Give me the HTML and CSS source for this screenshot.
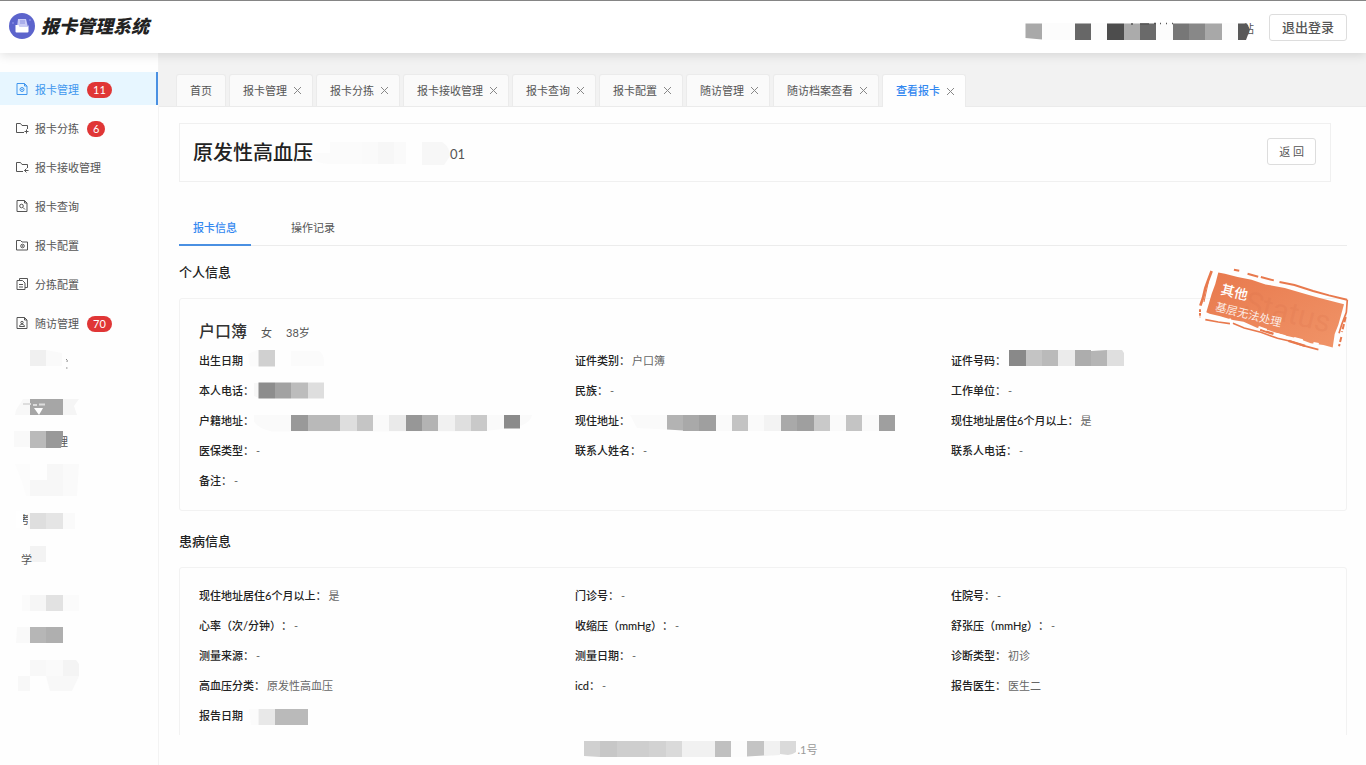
FILE: index.html
```html
<!DOCTYPE html>
<html lang="zh-CN">
<head>
<meta charset="utf-8">
<title>报卡管理系统</title>
<link rel="stylesheet" href="styles.css">
</head>
<body>
<header class="header">
  <div class="brand">
    <svg class="brand-logo" viewBox="0 0 26 26" width="26" height="26" aria-hidden="true">
      <circle cx="13" cy="13" r="13" fill="#5c64cc"/>
      <circle cx="4" cy="10" r="1" fill="#8289e0"/><circle cx="21" cy="7" r="1" fill="#8289e0"/>
      <path d="M9 6h8l2 8H8z" fill="#c9cbf5"/>
      <path d="M11 8h5M11 10h5" stroke="#8a90e0" stroke-width="1"/>
      <path d="M6.500 12h3l1 2h8l1-2v6.500a1 1 0 0 1-1 1h-11a1 1 0 0 1-1-1z" fill="#fff"/>
    </svg>
    <h1 class="brand-name">报卡管理系统</h1>
  </div>
  <div class="header-right">
    <svg viewBox="1025 1 231 52" width="231" height="52" aria-hidden="true">
      <text class="fragment-text" x="1243" y="33">站</text>
      <path d="M1042 23h196v17h-196z" fill="#fcfcfc"/>
      <path d="M1025.500 23.500h16.500v16l-16.500-1.500z" fill="#a9a9a9"/>
      <path d="M1075 23.500h16v16.500h-16z" fill="#676767"/>
      <path d="M1107 23.500h17v16.500h-17z" fill="#4d4d4d"/>
      <path d="M1124 23.500h16v16.500h-16z" fill="#ababab"/>
      <path d="M1140 23.500h16v16.500h-16z" fill="#6a6a6a"/>
      <path d="M1173 23.500h16v16.500h-16z" fill="#777"/>
      <path d="M1189 23.500h16v16.500h-16z" fill="#888"/>
      <path d="M1205 23.500h17v16.500h-17z" fill="#a8a8a8"/>
      <path d="M1238 23.500h9l3 6-4 10.500h-8z" fill="#595959"/>
      <path d="M1131 24h2M1140 24h9M1154 23.500h2M1160 23.500h1M1166 23.500h1M1172 23.500h1" stroke="#555" stroke-width="1.500"/>
    </svg>
    <button class="btn btn-logout" type="button">退出登录</button>
  </div>
</header>
<div class="body">
  <nav class="sidebar" aria-label="主菜单">
    <a class="menu-item active" href="#">
      <svg class="icon" viewBox="0 0 14 14"><path d="M2 1.500h7.500L12 4v8.500H2zM9.500 1.500V4H12"/><circle cx="7" cy="7.500" r="2"/><circle cx="7" cy="7.500" r=".5"/></svg>
      <span>报卡管理</span><span class="badge">11</span></a>
    <a class="menu-item" href="#">
      <svg class="icon" viewBox="0 0 14 14"><path d="M9 11.500H1.500v-9h4l1.500 2h5.500V8M11.500 8.500v4M9.500 10.500h4"/></svg>
      <span>报卡分拣</span><span class="badge">6</span></a>
    <a class="menu-item" href="#">
      <svg class="icon" viewBox="0 0 14 14"><path d="M8 11.500H1.500v-9h4l1.500 2h5.500V8M13.500 10.500h-4M11.500 8.500l-2 2 2 2"/></svg>
      <span>报卡接收管理</span></a>
    <a class="menu-item" href="#">
      <svg class="icon" viewBox="0 0 14 14"><path d="M2 1.500h7.500L12 4v8.500H2zM9.500 1.500V4H12M8 8.500l2 2"/><circle cx="6.500" cy="7" r="1.800"/></svg>
      <span>报卡查询</span></a>
    <a class="menu-item" href="#">
      <svg class="icon" viewBox="0 0 14 14"><path d="M1.500 2.500h4l1.500 1.500h5.500v8h-11z"/><circle cx="7.500" cy="8" r="1.800"/><circle cx="7.500" cy="8" r=".4"/></svg>
      <span>报卡配置</span></a>
    <a class="menu-item" href="#">
      <svg class="icon" viewBox="0 0 14 14"><path d="M4.500 3.500v-2h8v9h-2.500M2 3.500h5.500l2.500 2.500v6.500H2zM4 7.500h4M4 10h4"/></svg>
      <span>分拣配置</span></a>
    <a class="menu-item" href="#">
      <svg class="icon" viewBox="0 0 14 14"><path d="M2 1.500h7.500L12 4v8.500H2zM9.500 1.500V4H12M4.500 10.500c0-3 5-3 5 0z"/><circle cx="7" cy="6.500" r="1.200"/></svg>
      <span>随访管理</span><span class="badge">70</span></a>
    <svg viewBox="0 345 158 350" width="158" height="350" aria-hidden="true">
      <path d="M30 350h16v16H30z" fill="#f0f0f0"/><path d="M46 350l16 3v13H46z" fill="#fafafa"/>
      <path d="M66 359q2 1 1 3M66 368h1.500" stroke="#888" fill="none"/>
      <path d="M16 410l7-11h7v16H15z" fill="#f8f8f8"/><path d="M30 399h33v16H30z" fill="#a6a6a6"/>
      <path d="M63 399h16l-5 7 3 9H63z" fill="#f5f5f5"/><path d="M34 408h9l-4 7z" fill="#fff"/>
      <path d="M23 404h8M33 405h4M39 404.500h6" stroke="#ddd" stroke-width="2" fill="none"/>
      <path d="M14 431h16v16H14z" fill="#f9f9f9"/><text class="fragment-text" x="57" y="446">理</text>
      <path d="M30 431h16v17H30z" fill="#bababa"/><path d="M46 431h17v5l-2 12H46z" fill="#999"/>
      <path d="M15 464h15v32h-4l-4-14z" fill="#fcfcfc"/><path d="M30 480h17v-16h16v32H30z" fill="#f7f7f7"/><path d="M63 464h16l-2 32H63z" fill="#fafafa"/>
      <text class="fragment-text" x="19" y="524">考</text><path d="M16 511h7v17h-7z" fill="#fff"/>
      <path d="M28 513h2v16h-2z" fill="#fafafa"/><path d="M30 513h16v16H30z" fill="#dedede"/><path d="M46 513h17v16H46z" fill="#e5e5e5"/><path d="M63 513h12v16H63z" fill="#fafafa"/>
      <path d="M30 546h16v16H30z" fill="#f3f3f3"/><text class="fragment-text" x="21" y="564">学</text>
      <path d="M22 595h8v16h-8zM63 595h16v16H63z" fill="#fbfbfb"/><path d="M30 595h16v16H30z" fill="#f6f6f6"/><path d="M46 595h17v16H46z" fill="#e2e2e2"/>
      <path d="M17 627h13v16H16z" fill="#f9f9f9"/><path d="M30 627h16v16H30z" fill="#b6b6b6"/><path d="M46 627h17v16H46z" fill="#afafaf"/>
      <path d="M30 660h16v16H30zM18 676h12v15H18zM46 676h33l-7 15H50z" fill="#f8f8f8"/><path d="M46 660h17v16H46z" fill="#fafafa"/><path d="M63 660h13l3 4v12H63z" fill="#f4f4f4"/>
    </svg>
  </nav>
  <main class="main">
    <div class="page-tabs">
      <a class="page-tab" href="#">首页</a>
      <div class="page-tab"><a href="#">报卡管理</a><button class="tab-close" type="button" aria-label="关闭报卡管理"><svg viewBox="0 0 9 9"><path d="M1 1l7 7M8 1l-7 7"/></svg></button></div>
      <div class="page-tab"><a href="#">报卡分拣</a><button class="tab-close" type="button" aria-label="关闭报卡分拣"><svg viewBox="0 0 9 9"><path d="M1 1l7 7M8 1l-7 7"/></svg></button></div>
      <div class="page-tab"><a href="#">报卡接收管理</a><button class="tab-close" type="button" aria-label="关闭报卡接收管理"><svg viewBox="0 0 9 9"><path d="M1 1l7 7M8 1l-7 7"/></svg></button></div>
      <div class="page-tab"><a href="#">报卡查询</a><button class="tab-close" type="button" aria-label="关闭报卡查询"><svg viewBox="0 0 9 9"><path d="M1 1l7 7M8 1l-7 7"/></svg></button></div>
      <div class="page-tab"><a href="#">报卡配置</a><button class="tab-close" type="button" aria-label="关闭报卡配置"><svg viewBox="0 0 9 9"><path d="M1 1l7 7M8 1l-7 7"/></svg></button></div>
      <div class="page-tab"><a href="#">随访管理</a><button class="tab-close" type="button" aria-label="关闭随访管理"><svg viewBox="0 0 9 9"><path d="M1 1l7 7M8 1l-7 7"/></svg></button></div>
      <div class="page-tab"><a href="#">随访档案查看</a><button class="tab-close" type="button" aria-label="关闭随访档案查看"><svg viewBox="0 0 9 9"><path d="M1 1l7 7M8 1l-7 7"/></svg></button></div>
      <div class="page-tab current"><a href="#">查看报卡</a><button class="tab-close" type="button" aria-label="关闭查看报卡"><svg viewBox="0 0 9 9"><path d="M1 1l7 7M8 1l-7 7"/></svg></button></div>
    </div>
    <div class="content">
      <section class="title-card">
        <h2 class="title">原发性高血压</h2>
        <svg viewBox="313 137 137 32" width="137" height="32" aria-hidden="true">
          <path d="M313 154h17v-11h32v22h-32q-14 0-17-7z" fill="#fbfbfb"/><path d="M362 143h16v22h-16zM394 143h12v22h-12z" fill="#fafafa"/><path d="M378 143h16v22h-16zM422 143h20q8 5 8 14l-6 9h-22z" fill="#f7f7f7"/>
        </svg>
        <span class="card-no">01</span>
        <button class="btn btn-back" type="button">返 回</button>
      </section>
      <div class="tabs">
        <button class="tab selected" type="button">报卡信息</button>
        <button class="tab" type="button">操作记录</button>
      </div>

      <h3 class="section-title">个人信息</h3>
      <section class="info-card personal">
        <svg class="stamp" viewBox="140 50 460 255" width="153" height="85" role="img" aria-label="其他 基层无法处理">
          <defs><linearGradient id="stampFill" x1="0" y1="0" x2="1" y2="1"><stop offset="0" stop-color="#e8794d"/><stop offset="1" stop-color="#f09468"/></linearGradient></defs>
          <path d="M204 66l20 4 38 10 42 8 42 14 58 11 62 18 40 11 76 20-8 29-9 32-11 28-6 41-28-8-38-5-38-14-42-10-46-15-36-8-40-18-32-5-38-11-32-8-10-4 9-31 7-24 11-30z" fill="url(#stampFill)"/>
          <g fill="none" stroke="#e8794d" stroke-width="6">
            <path d="M184 62l-11 29-8 22-7 30-8 23" stroke-width="8"/><path d="M149 177v24" stroke-dasharray="8 3"/>
            <path d="M174 95l-13 60" stroke-width="3"/>
            <path d="M251 58l16 3M292 70l32 9M332 80l39 10M388 95l45 9 56 18 48 13 54 13"/>
            <path d="M592 148l-3 38-14 37-8 26" stroke-width="5"/><path d="M587 200l-11 45M574 260l-7 28" stroke-dasharray="16 6"/>
            <path d="M165 208l39 7 35 5M248 219l34 14 50 13 50 18 39 9 39 13 45 12" stroke-width="5"/>
            <path d="M415 272l50 15M330 238l40 13" stroke-width="7"/>
          </g>
          <path d="M238 205l5 14M325 230l25 9M380 251l26 7M432 263l26 7M490 278l16 3" stroke="#fff" stroke-width="6" fill="none"/>
          <text class="stamp-mark" transform="translate(278 184) rotate(14)">Status</text>
          <text class="stamp-title" transform="translate(209 130) rotate(14)">其他</text>
          <text class="stamp-note" transform="translate(193 180) rotate(14)">基层无法处理</text>
        </svg>
        <div class="person"><strong class="person-name">户口簿</strong><span>女</span><span>38岁</span></div>
        <dl class="fields">
          <div class="field"><dt>出生日期</dt><dd><svg viewBox="243 345 84 30" width="84" height="30" aria-hidden="true"><path d="M258.500 350h16.500v16.500h-16.500z" fill="#d0d0d0"/><path d="M248 354l10-4v16.500h-8zM291 351h28q6 3 5 15h-33z" fill="#fbfbfb"/></svg></dd></div>
          <div class="field"><dt>证件类别：</dt><dd>户口簿</dd></div>
          <div class="field"><dt>证件号码：</dt><dd><svg viewBox="1006 345 120 30" width="120" height="30" aria-hidden="true"><path d="M1009 350h17v16h-17z" fill="#898989"/><path d="M1026 350h16v16h-16z" fill="#c4c4c4"/><path d="M1042 350h16v16h-16z" fill="#bababa"/><path d="M1058 350h17v16h-17z" fill="#ebebeb"/><path d="M1075 350h16v16h-16z" fill="#adadad"/><path d="M1091 351l16-1v16h-16z" fill="#b5b5b5"/><path d="M1107 350h15l2 3v13h-17z" fill="#dfdfdf"/></svg></dd></div>
          <div class="field"><dt>本人电话：</dt><dd><svg viewBox="254 375 72 30" width="72" height="30" aria-hidden="true"><path d="M254 383h5v15l-5-2z" fill="#f7f7f7"/><path d="M258.500 382.500h16.500v16h-16.500z" fill="#8d8d8d"/><path d="M275 382.500h16v16h-16z" fill="#a2a2a2"/><path d="M291 382.500h17v16h-17z" fill="#bcbcbc"/><path d="M308 382.500h16v16h-16z" fill="#dedede"/></svg></dd></div>
          <div class="field"><dt>民族：</dt><dd>-</dd></div>
          <div class="field"><dt>工作单位：</dt><dd>-</dd></div>
          <div class="field"><dt>户籍地址：</dt><dd><svg viewBox="254 405 282 30" width="282" height="30" aria-hidden="true"><path d="M254 415h278q-2 12-30 14l-20 2.500h-210q-14-3-18-10z" fill="#fafafa"/><path d="M291 415h17v16h-17z" fill="#999"/><path d="M308 415h32v16h-32z" fill="#b9b9b9"/><path d="M340 415h17v16h-17z" fill="#dedede"/><path d="M357 415h16v16h-16z" fill="#c5c5c5"/><path d="M389 415h17v16h-17z" fill="#eaeaea"/><path d="M406 415h16v16h-16z" fill="#979797"/><path d="M422 415h16v16h-16z" fill="#b3b3b3"/><path d="M438 415h17v16h-17z" fill="#f1f1f1"/><path d="M455 415h16v16h-16z" fill="#dfdfdf"/><path d="M471 415h16v16h-16z" fill="#c9c9c9"/><path d="M504 415h16v13.500h-16z" fill="#8b8b8b"/></svg></dd></div>
          <div class="field"><dt>现住地址：</dt><dd><svg viewBox="630 405 268 30" width="268" height="30" aria-hidden="true"><path d="M630 415h265v16h-200l-58-3z" fill="#fafafa"/><path d="M667 415h16v15.500l-16-1z" fill="#b3b3b3"/><path d="M683 415h16v16h-16z" fill="#a9a9a9"/><path d="M699 415h17v16h-17z" fill="#9f9f9f"/><path d="M732 415h16v16h-16z" fill="#c3c3c3"/><path d="M764 415h17v16h-17z" fill="#f3f3f3"/><path d="M781 415h16v16h-16z" fill="#a9a9a9"/><path d="M797 415h17v16h-17z" fill="#9f9f9f"/><path d="M814 415h16v16h-16z" fill="#c9c9c9"/><path d="M846 415h16v16h-16z" fill="#c4c4c4"/><path d="M879 415h16v16h-16z" fill="#9f9f9f"/></svg></dd></div>
          <div class="field"><dt>现住地址居住6个月以上：</dt><dd>是</dd></div>
          <div class="field"><dt>医保类型：</dt><dd>-</dd></div>
          <div class="field"><dt>联系人姓名：</dt><dd>-</dd></div>
          <div class="field"><dt>联系人电话：</dt><dd>-</dd></div>
          <div class="field"><dt>备注：</dt><dd>-</dd></div>
        </dl>
      </section>

      <h3 class="section-title later">患病信息</h3>
      <section class="info-card">
        <dl class="fields">
          <div class="field"><dt>现住地址居住6个月以上：</dt><dd>是</dd></div>
          <div class="field"><dt>门诊号：</dt><dd>-</dd></div>
          <div class="field"><dt>住院号：</dt><dd>-</dd></div>
          <div class="field"><dt>心率（次/分钟）：</dt><dd>-</dd></div>
          <div class="field"><dt>收缩压（mmHg）：</dt><dd>-</dd></div>
          <div class="field"><dt>舒张压（mmHg）：</dt><dd>-</dd></div>
          <div class="field"><dt>测量来源：</dt><dd>-</dd></div>
          <div class="field"><dt>测量日期：</dt><dd>-</dd></div>
          <div class="field"><dt>诊断类型：</dt><dd>初诊</dd></div>
          <div class="field"><dt>高血压分类：</dt><dd>原发性高血压</dd></div>
          <div class="field"><dt>icd：</dt><dd>-</dd></div>
          <div class="field"><dt>报告医生：</dt><dd>医生二</dd></div>
          <div class="field"><dt>报告日期</dt><dd><svg viewBox="243 700 70 30" width="70" height="30" aria-hidden="true"><path d="M249 709h9v16h-7z" fill="#fbfbfb"/><path d="M258.500 709h16.500v16h-16.500z" fill="#e8e8e8"/><path d="M275 709h33v16h-33z" fill="#bababa"/></svg></dd></div>
        </dl>
      </section>
    </div>
    <footer class="footer">
      <svg viewBox="585 735 214 30" width="214" height="30" aria-hidden="true"><path d="M585 741h16v16l-16-1z" fill="#d0d0d0"/><path d="M601 741h17v16h-17z" fill="#c7c7c7"/><path d="M618 741h32v16h-32z" fill="#cecece"/><path d="M650 741h17v16h-17z" fill="#d2d2d2"/><path d="M667 741h16v16h-16z" fill="#dadada"/><path d="M683 741h33v16h-33zM765 741h16v14l-16 1z" fill="#f1f1f1"/><path d="M716 741h16v16h-16z" fill="#c0c0c0"/><path d="M732 741h16v16h-16z" fill="#fcfcfc"/><path d="M748 741h17v14.500l-17 1z" fill="#c4c4c4"/><path d="M781 741h16v11q-4 3-8 3l-8-1z" fill="#dadada"/></svg>
      <span>.1号</span>
    </footer>
  </main>
</div>
</body>
</html>
```
FILE: styles.css
```css
* { box-sizing: border-box; }
body {
  margin: 0;
  height: 100vh;
  display: flex;
  flex-direction: column;
  overflow: hidden;
  border-top: 1px solid #858585;
  background: #fefefe;
  color: #555;
  font-family: Lato, "Noto Sans CJK SC", sans-serif;
  font-size: 11px;
  line-height: 16px;
  text-spacing-trim: space-all;
}
h1, h2, h3, dl, dd { margin: 0; }
a { color: inherit; text-decoration: none; }
button { font: inherit; color: inherit; cursor: pointer; }
svg { display: block; flex: none; }

.header {
  flex: none;
  display: flex;
  align-items: center;
  justify-content: space-between;
  height: 52px;
  padding: 0 19px 0 9px;
  background: #fff;
  box-shadow: 0 2px 10px rgba(0, 0, 0, .12);
  position: relative;
  z-index: 1;
}
.brand { display: flex; align-items: center; gap: 6px; padding-bottom: 2px; }
.brand-name {
  font-size: 18px;
  font-weight: 900;
  font-style: italic;
  line-height: 24px;
  color: #222;
}
.header-right { display: flex; align-items: center; gap: 13px; }
.fragment-text { font-size: 11px; fill: #555; }
.btn {
  height: 27px;
  padding: 0 12px;
  border: 1px solid #ddd;
  border-radius: 3px;
  background: #fff;
}
.btn-logout { font-size: 13px; font-weight: 500; }
.btn-back { margin-left: auto; padding: 0 11px; }

.body { flex: 1; display: flex; min-height: 0; }
.sidebar {
  flex: none;
  width: 159px;
  padding-top: 19px;
  border-right: 1px solid #f3f3f3;
  overflow: hidden;
}
.menu-item {
  display: flex;
  align-items: center;
  height: 33px;
  margin-bottom: 6px;
  padding: 2px 0 0 15px;
  border-right: 2px solid transparent;
}
.menu-item.active { color: #4096ee; background: #e7f6ff; border-color: #4a90e2; }
.icon {
  width: 14px;
  height: 14px;
  margin: 0 6px 2px 0;
  fill: none;
  stroke: currentColor;
}
.badge {
  min-width: 16px;
  margin-left: 8px;
  padding: 0 6px;
  border-radius: 8px;
  background: #e03636;
  color: #fff;
  text-align: center;
}

.main { flex: 1; min-width: 0; display: flex; flex-direction: column; }
.page-tabs {
  flex: none;
  display: flex;
  align-items: flex-end;
  gap: 3px;
  height: 54px;
  padding-left: 17px;
  background: #f2f2f2;
  border-bottom: 1px solid #ebebeb;
}
.page-tab {
  display: flex;
  align-items: center;
  gap: 6px;
  height: 32px;
  padding: 0 10px 0 13px;
  border: 1px solid #ebebeb;
  border-bottom: 0;
  border-radius: 3px 3px 0 0;
  background: #fafafa;
}
.page-tab:first-child { padding-right: 13px; }
.page-tab.current { height: 33px; margin-bottom: -1px; background: #fefefe; }
.page-tab.current a { color: #3388f0; font-weight: 500; }
.tab-close { width: 9px; height: 9px; padding: 0; border: 0; background: none; }
.tab-close svg { width: 9px; height: 9px; stroke: #888; fill: none; }

.content { flex: 1; min-height: 0; overflow: hidden; padding: 16px 19px 0 20px; }
.title-card {
  display: flex;
  align-items: center;
  height: 59px;
  margin-right: 16px;
  padding: 0 14px 2px 13px;
  border: 1px solid #f0f0f0;
}
.title { font-size: 20px; font-weight: 500; line-height: 28px; color: #222; }
.card-no { font-size: 13px; padding-top: 4px; }
.tabs {
  display: flex;
  gap: 26px;
  margin-top: 29px;
  border-bottom: 1px solid #ececec;
}
.tab {
  height: 35px;
  margin-bottom: -1px;
  padding: 0 14px;
  border: 0;
  border-bottom: 2px solid transparent;
  background: none;
}
.tab.selected { color: #3388f0; border-color: #4a90e2; font-weight: 500; }
.section-title { font-size: 13px; font-weight: 500; line-height: 52px; color: #222; }
.section-title.later { margin-top: 4px; }
.info-card {
  position: relative;
  padding: 13px 19px 14px;
  border: 1px solid #f2f2f2;
  border-radius: 3px;
}
.info-card.personal { padding-top: 16px; }
.person { display: flex; align-items: baseline; gap: 14px; height: 31px; line-height: 31px; }
.person-name { font-size: 16px; font-weight: 500; color: #333; }
.fields { display: grid; grid-template-columns: repeat(3, 1fr); }
.field { display: flex; height: 30px; line-height: 30px; }
.field dt { color: #222; font-weight: 500; }
.field dd { padding-left: 2px; color: #666; }
.field svg { margin: -1px 0 0 -2px; }

.stamp { position: absolute; top: -32px; right: -4px; }
.stamp-title { font-size: 41px; font-weight: 500; fill: #fff; }
.stamp-note { font-size: 34px; fill: #fff; fill-opacity: .85; }
.stamp-mark { font-family: Roboto, sans-serif; font-size: 92px; fill: #d9704a; fill-opacity: .2; }

.footer {
  flex: none;
  display: flex;
  align-items: center;
  justify-content: center;
  height: 30px;
  padding-right: 124px;
  color: #999;
}
```
